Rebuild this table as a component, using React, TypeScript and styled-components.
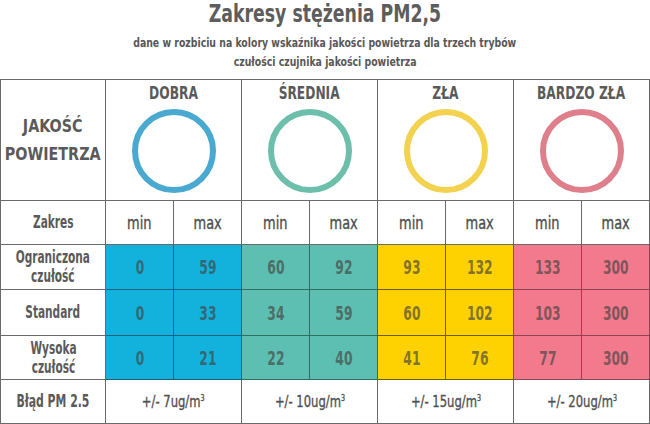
import React from "react";
import styled, { createGlobalStyle, css } from "styled-components";

const FONT = `"DejaVu Sans Condensed", "DejaVu Sans", sans-serif`;

const narrow = (s: number) => css`
  display: inline-block;
  white-space: nowrap;
  transform: scaleX(${s});
  transform-origin: 50% 50%;
`;

const Global = createGlobalStyle`
  html, body { margin: 0; padding: 0; background: #ffffff; }
  body { font-family: ${FONT}; color: #5a5a5a; }
`;

const Page = styled.div`
  width: 650px;
  height: 424px;
  overflow: hidden;
  background: #fff;
  display: flex;
  flex-direction: column;
`;

const Heading = styled.header`
  height: 79px;
  display: flex;
  flex-direction: column;
  align-items: center;
`;

const Title = styled.h1`
  margin: 0;
  font-size: 25px;
  line-height: 28px;
  font-weight: 700;
  color: #5d5d5d;
  ${narrow(0.77)}
`;

const Sub = styled.div<{ $first?: boolean }>`
  margin-top: ${(p) => (p.$first ? "5px" : "0")};
  font-size: 12.5px;
  line-height: 19px;
  font-weight: 700;
  color: #585858;
  ${narrow(0.83)}
`;

const Table = styled.div`
  display: grid;
  grid-template-columns: 105px repeat(8, 1fr);
  grid-template-rows: 121px 44px 45px 46px 44px 44px;
  border-top: 1px solid #6a6a6a;
  border-left: 1px solid #6a6a6a;
`;

const Cell = styled.div<{ $span?: number; $bg?: string; $line?: string }>`
  grid-column: span ${(p) => p.$span ?? 1};
  background: ${(p) => p.$bg ?? "#fff"};
  border-right: 1px solid ${(p) => p.$line ?? "#6a6a6a"};
  border-bottom: 1px solid ${(p) => p.$line ?? "#6a6a6a"};
  display: flex;
  flex-direction: column;
  align-items: center;
  justify-content: center;
  text-align: center;
  box-sizing: border-box;
  min-width: 0;
`;

const QualityLabel = styled.div`
  font-size: 18.5px;
  line-height: 28px;
  font-weight: 700;
  color: #5a5a5a;
  margin: 0 -12px;
  ${narrow(0.86)}
`;

const GroupHead = styled(Cell)`
  justify-content: flex-start;
  padding-top: 3px;
`;

const GroupName = styled.div`
  font-size: 17px;
  line-height: 20px;
  font-weight: 700;
  color: #5a5a5a;
  ${narrow(0.8)}
`;

const Ring = styled.div<{ $color: string }>`
  margin-top: 6px;
  width: 84px;
  height: 84px;
  border-radius: 50%;
  box-sizing: border-box;
  border: 6px solid ${(p) => p.$color};
`;

const RowLabel = styled.div<{ $size?: number }>`
  font-size: ${(p) => p.$size ?? 17}px;
  line-height: 19px;
  font-weight: 700;
  color: #5a5a5a;
  margin: 0 -14px;
  ${narrow(0.69)}
`;

const MinMax = styled.div`
  font-size: 18px;
  font-weight: 400;
  color: #4f4f4f;
  -webkit-text-stroke: 0.35px #4f4f4f;
  ${narrow(0.8)}
`;

const Value = styled.div`
  font-size: 19px;
  font-weight: 700;
  color: rgba(68, 68, 68, 0.68);
  ${narrow(0.72)}
`;

const ErrValue = styled.div`
  font-size: 16.5px;
  font-weight: 400;
  color: #505050;
  -webkit-text-stroke: 0.35px #505050;
  ${narrow(0.78)}
  sup {
    font-size: 9px;
    vertical-align: 6px;
    line-height: 0;
  }
`;

const groups = [
  { name: "DOBRA", ring: "#4aa9d1", fill: "#12b2dd", line: "#17617a", err: "+/- 7ug/m" },
  { name: "ŚREDNIA", ring: "#6dbfab", fill: "#5dbfb1", line: "#2e6f64", err: "+/- 10ug/m" },
  { name: "ZŁA", ring: "#f2d24e", fill: "#fed100", line: "#6e5d10", err: "+/- 15ug/m" },
  { name: "BARDZO ZŁA", ring: "#df7f8b", fill: "#f27a8c", line: "#8b4553", err: "+/- 20ug/m" },
];

const rows: { label: React.ReactNode; values: number[] }[] = [
  { label: <>Ograniczona<br />czułość</>, values: [0, 59, 60, 92, 93, 132, 133, 300] },
  { label: "Standard", values: [0, 33, 34, 59, 60, 102, 103, 300] },
  { label: <>Wysoka<br />czułość</>, values: [0, 21, 22, 40, 41, 76, 77, 300] },
];

export default function App() {
  return (
    <>
      <Global />
      <Page>
        <Heading>
          <Title>Zakresy stężenia PM2,5</Title>
          <Sub $first>dane w rozbiciu na kolory wskaźnika jakości powietrza dla trzech trybów</Sub>
          <Sub>czułości czujnika jakości powietrza</Sub>
        </Heading>
        <Table>
          <Cell>
            <QualityLabel>
              JAKOŚĆ
              <br />
              POWIETRZA
            </QualityLabel>
          </Cell>
          {groups.map((g) => (
            <GroupHead key={g.name} $span={2}>
              <GroupName>{g.name}</GroupName>
              <Ring $color={g.ring} />
            </GroupHead>
          ))}

          <Cell>
            <RowLabel>Zakres</RowLabel>
          </Cell>
          {groups.map((g) => (
            <React.Fragment key={g.name}>
              <Cell>
                <MinMax>min</MinMax>
              </Cell>
              <Cell>
                <MinMax>max</MinMax>
              </Cell>
            </React.Fragment>
          ))}

          {rows.map((r, ri) => (
            <React.Fragment key={ri}>
              <Cell>
                <RowLabel>{r.label}</RowLabel>
              </Cell>
              {r.values.map((v, i) => {
                const g = groups[Math.floor(i / 2)];
                return (
                  <Cell key={i} $bg={g.fill} $line={g.line}>
                    <Value>{v}</Value>
                  </Cell>
                );
              })}
            </React.Fragment>
          ))}

          <Cell>
            <RowLabel $size={17.5}>Błąd PM 2.5</RowLabel>
          </Cell>
          {groups.map((g) => (
            <Cell key={g.name} $span={2}>
              <ErrValue>
                {g.err}
                <sup>3</sup>
              </ErrValue>
            </Cell>
          ))}
        </Table>
      </Page>
    </>
  );
}
